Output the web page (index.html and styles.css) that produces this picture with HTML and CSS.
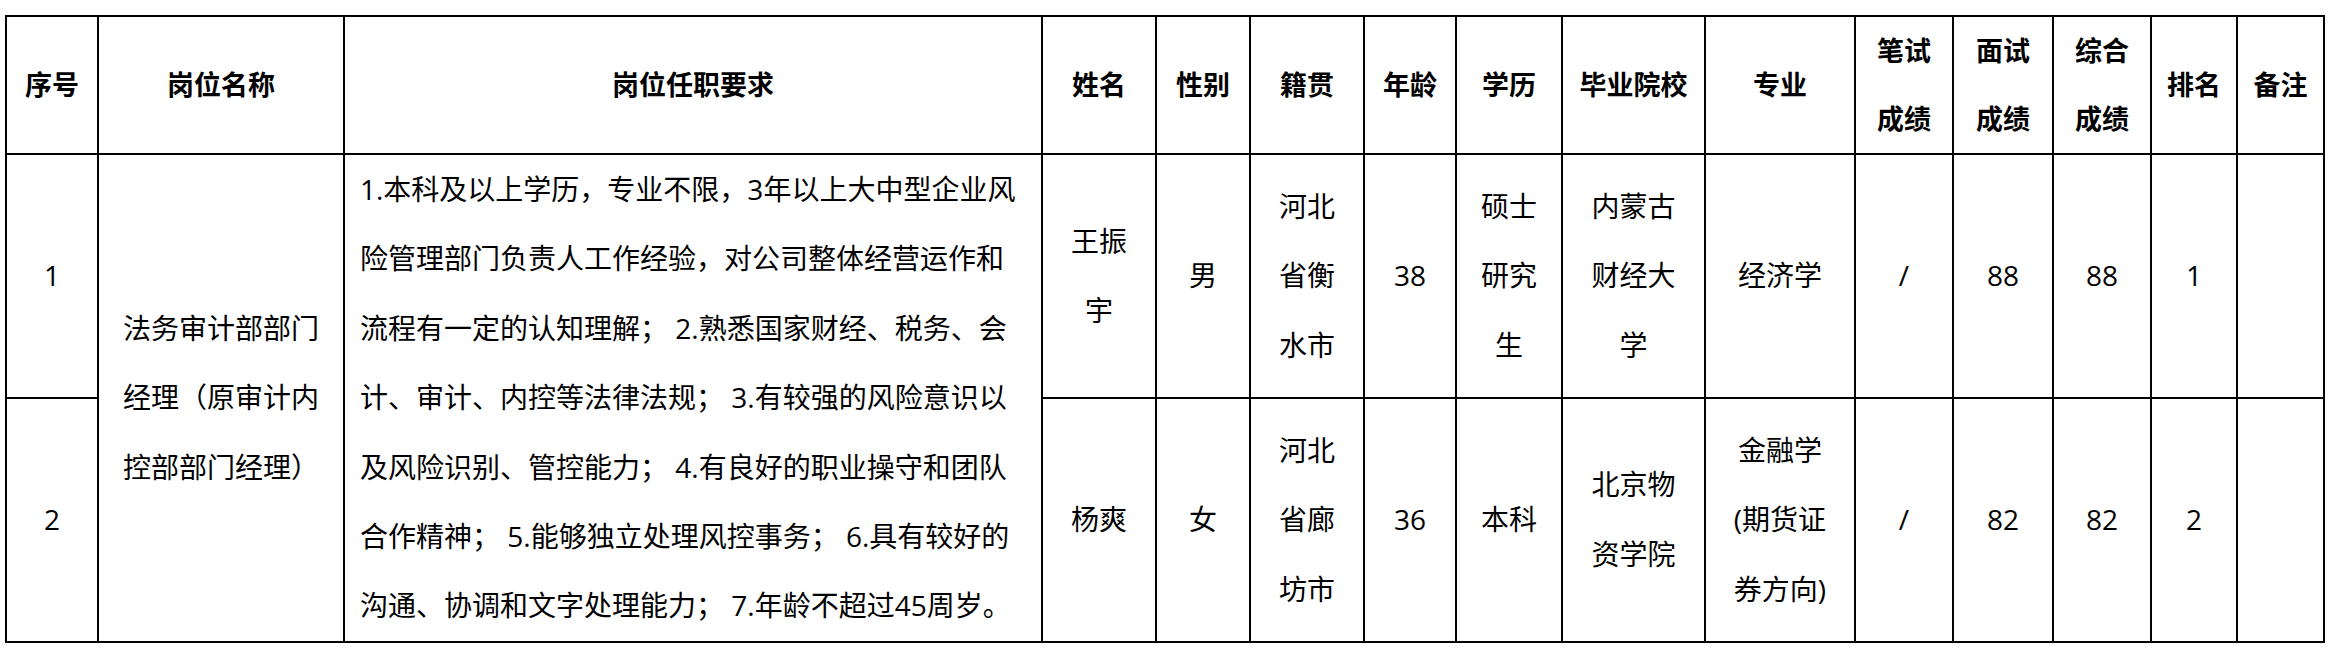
FILE: index.html
```html
<!DOCTYPE html>
<html lang="zh-CN">
<head>
<meta charset="utf-8">
<title>拟聘人员名单</title>
<link rel="stylesheet" href="styles.css">
</head>
<body>
<table class="grid">
  <colgroup>
    <col class="c-no">
    <col class="c-post">
    <col class="c-req">
    <col class="c-name">
    <col class="c-sex">
    <col class="c-home">
    <col class="c-age">
    <col class="c-edu">
    <col class="c-school">
    <col class="c-major">
    <col class="c-s1">
    <col class="c-s2">
    <col class="c-s3">
    <col class="c-rank">
    <col class="c-note">
  </colgroup>
  <thead>
    <tr class="head-row">
      <th>序号</th>
      <th>岗位名称</th>
      <th>岗位任职要求</th>
      <th>姓名</th>
      <th>性别</th>
      <th>籍贯</th>
      <th>年龄</th>
      <th>学历</th>
      <th>毕业院校</th>
      <th>专业</th>
      <th>笔试<br>成绩</th>
      <th>面试<br>成绩</th>
      <th>综合<br>成绩</th>
      <th>排名</th>
      <th>备注</th>
    </tr>
  </thead>
  <tbody>
    <tr class="body-row">
      <td>1</td>
      <td rowspan="2">法务审计部部门<br>经理（原审计内<br>控部部门经理）</td>
      <td rowspan="2" class="req">1.本科及以上学历，专业不限，3年以上大中型企业风<br>险管理部门负责人工作经验，对公司整体经营运作和<br>流程有一定的认知理解； 2.熟悉国家财经、税务、会<br>计、审计、内控等法律法规； 3.有较强的风险意识以<br>及风险识别、管控能力； 4.有良好的职业操守和团队<br>合作精神； 5.能够独立处理风控事务； 6.具有较好的<br>沟通、协调和文字处理能力； 7.年龄不超过45周岁。</td>
      <td>王振<br>宇</td>
      <td>男</td>
      <td>河北<br>省衡<br>水市</td>
      <td>38</td>
      <td>硕士<br>研究<br>生</td>
      <td>内蒙古<br>财经大<br>学</td>
      <td>经济学</td>
      <td>/</td>
      <td>88</td>
      <td>88</td>
      <td>1</td>
      <td></td>
    </tr>
    <tr class="body-row">
      <td>2</td>
      <td>杨爽</td>
      <td>女</td>
      <td>河北<br>省廊<br>坊市</td>
      <td>36</td>
      <td>本科</td>
      <td>北京物<br>资学院</td>
      <td>金融学<br>(期货证<br>券方向)</td>
      <td>/</td>
      <td>82</td>
      <td>82</td>
      <td>2</td>
      <td></td>
    </tr>
  </tbody>
</table>
</body>
</html>
```

FILE: styles.css
```css
html, body {
  margin: 0;
  padding: 0;
  background: #ffffff;
}

body {
  font-family: "Open Sans", "Noto Sans CJK SC", sans-serif;
  color: #000000;
}

.grid {
  border-collapse: collapse;
  table-layout: fixed;
  width: 2318px;
  margin: 15px 0 0 5px;
}

.grid th,
.grid td {
  border: 2px solid #000000;
  padding: 0;
  text-align: center;
  vertical-align: middle;
  white-space: nowrap;
}

.grid th {
  font-size: 27px;
  font-weight: 700;
  line-height: 68px;
}

.grid td {
  font-size: 28px;
  font-weight: 400;
  line-height: 69.4px;
}

.head-row {
  height: 138px;
}

.body-row {
  height: 243px;
}

.grid td.req {
  text-align: left;
  padding-left: 15px;
}

.c-no { width: 92px; }
.c-post { width: 246px; }
.c-req { width: 698px; }
.c-name { width: 114px; }
.c-sex { width: 94px; }
.c-home { width: 114px; }
.c-age { width: 92px; }
.c-edu { width: 106px; }
.c-school { width: 143px; }
.c-major { width: 150px; }
.c-s1 { width: 98px; }
.c-s2 { width: 100px; }
.c-s3 { width: 98px; }
.c-rank { width: 86px; }
.c-note { width: 87px; }
```
